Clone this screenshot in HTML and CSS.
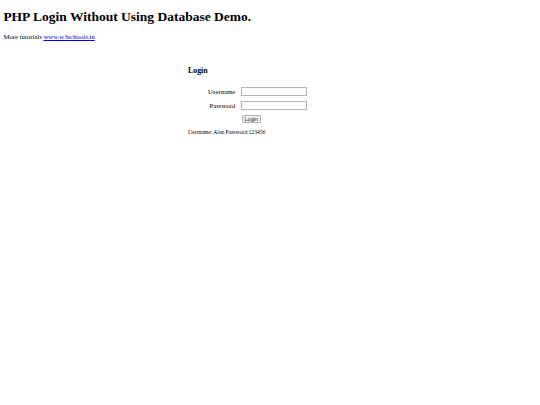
FILE: index.html
```
<!DOCTYPE html>
<html>
<head>
<meta charset="utf-8">
<title>PHP Login Without Using Database Demo.</title>
<link rel="stylesheet" href="styles.css">
</head>
<body>
<div class="page">
  <h1 class="title">PHP Login Without Using Database Demo.</h1>
  <div class="intro">More tutorials <a class="link" href="#">www.w3schools.in</a></div>
  <form class="login">
    <h3 class="login-title">Login</h3>
    <div class="fields">
      <label class="label" for="u">Username</label>
      <input class="input" id="u" type="text">
      <label class="label" for="p">Password</label>
      <input class="input" id="p" type="password">
      <span></span>
      <button class="btn" type="button">Login</button>
    </div>
    <div class="hint">Username: Alex Password:123456</div>
  </form>
</div>
</body>
</html>
```
FILE: styles.css
```
html, body {
  margin: 0;
  padding: 0;
  background: #fff;
}
.page {
  padding: 0 3.375px;
  font-family: "Liberation Serif", "Times New Roman", serif;
  color: #000;
}
.title {
  font-size: 13.5px;
  line-height: 15.5px;
  font-weight: bold;
  margin: 9px 0 0;
}
.intro {
  font-size: 6.75px;
  line-height: 7.8px;
  margin-top: 8.9px;
}
.link {
  color: #0000ee;
  text-decoration: underline;
}
.login {
  margin: 0 0 0 184.6px;
  padding-top: 25px;
  display: flex;
  flex-direction: column;
}
.login-title {
  font-size: 7.9px;
  line-height: 9px;
  font-weight: bold;
  margin: 0;
}
.fields {
  display: grid;
  grid-template-columns: 47.3px 66px;
  column-gap: 5.4px;
  row-gap: 5.6px;
  align-items: center;
  margin-top: 12px;
}
.label {
  font-size: 6.75px;
  text-align: right;
}
.input {
  box-sizing: border-box;
  width: 66px;
  height: 8.4px;
  margin: 0;
  padding: 0;
  border: 1px solid #b4b4b4;
  border-radius: 0.5px;
  background: #fff;
}
.btn {
  box-sizing: border-box;
  justify-self: start;
  width: 19.3px;
  height: 8.3px;
  margin: 0 0 0 1px;
  padding: 0;
  font-family: "Liberation Sans", Arial, sans-serif;
  font-size: 5.6px;
  line-height: 6px;
  color: #222;
  background: #efefef;
  border: 1px solid #b0b0b0;
  border-radius: 1px;
}
.hint {
  font-size: 5.6px;
  line-height: 6.5px;
  margin-top: 5.5px;
}
```
